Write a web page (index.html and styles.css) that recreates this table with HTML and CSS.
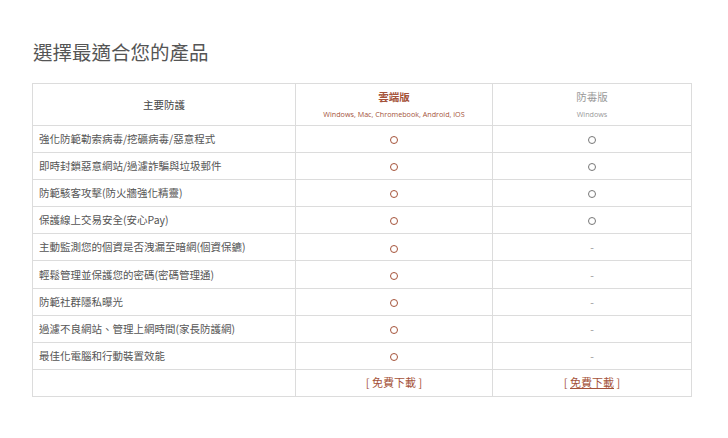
FILE: index.html
```html
<!DOCTYPE html>
<html lang="zh-Hant">
<head>
<meta charset="utf-8">
<title>選擇最適合您的產品</title>
<link rel="stylesheet" href="styles.css">
</head>
<body>
<div class="page">
  <h1 class="title">選擇最適合您的產品</h1>
  <table class="compare">
    <colgroup>
      <col class="c1"><col class="c2"><col class="c3">
    </colgroup>
    <thead>
      <tr class="head">
        <th class="feat-head">主要防護</th>
        <th class="prod cloud"><div class="pname">雲端版</div><div class="psub">Windows, Mac, Chromebook, Android, iOS</div></th>
        <th class="prod av"><div class="pname">防毒版</div><div class="psub">Windows</div></th>
      </tr>
    </thead>
    <tbody>
      <tr><td class="feat">強化防範勒索病毒/挖礦病毒/惡意程式</td><td class="yes cloud"><span class="dot" title="○"></span></td><td class="yes av"><span class="dot" title="○"></span></td></tr>
      <tr><td class="feat">即時封鎖惡意網站/過濾詐騙與垃圾郵件</td><td class="yes cloud"><span class="dot"></span></td><td class="yes av"><span class="dot"></span></td></tr>
      <tr><td class="feat">防範駭客攻擊(防火牆強化精靈)</td><td class="yes cloud"><span class="dot"></span></td><td class="yes av"><span class="dot"></span></td></tr>
      <tr><td class="feat">保護線上交易安全(安心Pay)</td><td class="yes cloud"><span class="dot"></span></td><td class="yes av"><span class="dot"></span></td></tr>
      <tr><td class="feat">主動監測您的個資是否洩漏至暗網(個資保鑣)</td><td class="yes cloud"><span class="dot"></span></td><td class="no">-</td></tr>
      <tr><td class="feat">輕鬆管理並保護您的密碼(密碼管理通)</td><td class="yes cloud"><span class="dot"></span></td><td class="no">-</td></tr>
      <tr><td class="feat">防範社群隱私曝光</td><td class="yes cloud"><span class="dot"></span></td><td class="no">-</td></tr>
      <tr><td class="feat">過濾不良網站、管理上網時間(家長防護網)</td><td class="yes cloud"><span class="dot"></span></td><td class="no">-</td></tr>
      <tr><td class="feat">最佳化電腦和行動裝置效能</td><td class="yes cloud"><span class="dot"></span></td><td class="no">-</td></tr>
      <tr><td class="feat"></td><td class="dl"><a href="#">[ 免費下載 ]</a></td><td class="dl"><a href="#">[ <span class="ul">免費下載</span> ]</a></td></tr>
    </tbody>
  </table>
</div>
</body>
</html>
```

FILE: styles.css
```css
* { box-sizing: border-box; }
html, body { margin: 0; padding: 0; background: #fff; }
body {
  font-family: "Noto Sans CJK TC", "Noto Sans", "Liberation Sans", sans-serif;
  color: #555;
}
.page { padding: 39px 0 0 33px; }
.title {
  margin: 0 0 18px 0;
  font-size: 19.5px;
  font-weight: 400;
  line-height: 26px;
  color: #555;
}
.compare {
  border-collapse: collapse;
  width: 659px;
  margin-left: -1px;
  table-layout: fixed;
}
.c1 { width: 263px; }
.c2 { width: 197px; }
.c3 { width: 199px; }
.compare th, .compare td {
  border: 1px solid #dcdcdc;
  padding: 0;
}
.head th { height: 42px; font-weight: 400; text-align: center; vertical-align: middle; }
.feat-head { font-size: 10.5px; color: #444; }
.pname { font-size: 10.5px; line-height: 14px; }
.psub { font-size: 7.2px; line-height: 12px; margin-top: 4px; font-family: "Open Sans", "Noto Sans", sans-serif; }
.prod.cloud { color: #a5533a; }
.prod.cloud .pname { font-weight: 700; }
.prod.av { color: #999; }
.compare td { height: 27.1px; font-size: 10.5px; line-height: 14px; }
.feat { padding-left: 6px !important; color: #555; }
.yes, .no, .dl { text-align: center; }
.dot {
  display: inline-block;
  width: 8px;
  height: 8px;
  border-radius: 50%;
  border: 1.3px solid currentColor;
  vertical-align: middle;
}
.yes.cloud { color: #a5533a; }
.yes.av { color: #777; }
.no { color: #999; font-size: 9px; }
.dl a { color: #a5533a; text-decoration: none; font-size: 11px; }
.dl .ul { text-decoration: underline; }
```
